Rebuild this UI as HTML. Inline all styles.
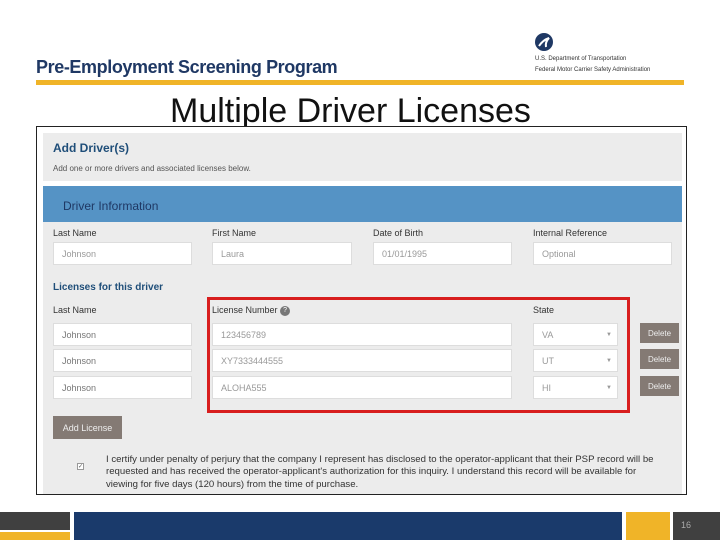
<!DOCTYPE html>
<html><head><style>
*{margin:0;padding:0;box-sizing:border-box}
body{width:720px;height:540px;background:#fff;position:relative;overflow:hidden;font-family:"Liberation Sans",sans-serif}
.a{position:absolute}
.lbl{position:absolute;font-size:9px;color:#333}
.in{position:absolute;background:#fff;border:1px solid #ddd;font-size:9px;color:#999;padding:0 0 0 8px;display:flex;align-items:center}
.del{position:absolute;background:#847a74;color:#eee;font-size:8px;display:flex;align-items:center;justify-content:center;width:39px;height:20px;left:640px}
</style></head><body>
<div class="a" style="left:36px;top:57px;font-size:18px;font-weight:bold;color:#1f3864;letter-spacing:-0.4px">Pre-Employment Screening Program</div>
<svg class="a" style="left:534px;top:32px" width="20" height="20" viewBox="0 0 20 20"><circle cx="10" cy="10" r="9" fill="#1f3864"/><path d="M5 14 Q9 8 15 6 Q11 10 12 15" fill="none" stroke="#fff" stroke-width="2"/></svg>
<div class="a" style="left:535px;top:56px;font-size:6px;color:#333">U.S. Department of Transportation</div>
<div class="a" style="left:535px;top:67px;font-size:6px;color:#333">Federal Motor Carrier Safety Administration</div>
<div class="a" style="left:36px;top:80px;width:648px;height:5px;background:#f0b428"></div>
<div class="a" style="left:170px;top:92px;font-size:34px;color:#111">Multiple Driver Licenses</div>
<div class="a" style="left:36px;top:126px;width:651px;height:369px;border:1px solid #222;background:#fff"></div>
<div class="a" style="left:43px;top:133px;width:639px;height:48px;background:#ececec"></div>
<div class="a" style="left:53px;top:141px;font-size:12px;font-weight:bold;color:#1f4e79">Add Driver(s)</div>
<div class="a" style="left:53px;top:164px;font-size:8px;color:#555">Add one or more drivers and associated licenses below.</div>
<div class="a" style="left:43px;top:186px;width:639px;height:36px;background:#5593c5"></div>
<div class="a" style="left:63px;top:199px;font-size:12px;color:#1f3864">Driver Information</div>
<div class="a" style="left:43px;top:222px;width:639px;height:272px;background:#ececec"></div>
<div class="lbl" style="left:53px;top:228px">Last Name</div>
<div class="lbl" style="left:212px;top:228px">First Name</div>
<div class="lbl" style="left:373px;top:228px">Date of Birth</div>
<div class="lbl" style="left:533px;top:228px">Internal Reference</div>
<div class="in" style="left:53px;top:242px;width:139px;height:23px">Johnson</div>
<div class="in" style="left:212px;top:242px;width:140px;height:23px">Laura</div>
<div class="in" style="left:373px;top:242px;width:139px;height:23px">01/01/1995</div>
<div class="in" style="left:533px;top:242px;width:139px;height:23px">Optional</div>
<div class="a" style="left:53px;top:282px;font-size:10px;font-weight:bold;color:#1f4e79">Licenses for this driver</div>
<div class="lbl" style="left:53px;top:305px">Last Name</div>
<div class="lbl" style="left:212px;top:305px">License Number <span style="display:inline-block;width:10px;height:10px;border-radius:50%;background:#777;color:#fff;font-size:7px;text-align:center;line-height:10px;vertical-align:middle">?</span></div>
<div class="lbl" style="left:533px;top:305px">State</div>
<div class="in" style="left:53px;top:323px;width:139px;height:23px;color:#777">Johnson</div>
<div class="in" style="left:53px;top:349px;width:139px;height:23px;color:#777">Johnson</div>
<div class="in" style="left:53px;top:376px;width:139px;height:23px;color:#777">Johnson</div>
<div class="in" style="left:212px;top:323px;width:300px;height:23px">123456789</div>
<div class="in" style="left:212px;top:349px;width:300px;height:23px">XY7333444555</div>
<div class="in" style="left:212px;top:376px;width:300px;height:23px">ALOHA555</div>
<div class="in" style="left:533px;top:323px;width:85px;height:23px">VA<span style="position:absolute;right:5px;font-size:6px">▼</span></div>
<div class="in" style="left:533px;top:349px;width:85px;height:23px">UT<span style="position:absolute;right:5px;font-size:6px">▼</span></div>
<div class="in" style="left:533px;top:376px;width:85px;height:23px">HI<span style="position:absolute;right:5px;font-size:6px">▼</span></div>
<div class="del" style="top:323px">Delete</div>
<div class="del" style="top:349px">Delete</div>
<div class="del" style="top:376px">Delete</div>
<div class="a" style="left:207px;top:297px;width:423px;height:116px;border:3px solid #d81e1e"></div>
<div class="a" style="left:53px;top:416px;width:69px;height:23px;background:#847a74;color:#eee;font-size:9px;display:flex;align-items:center;justify-content:center">Add License</div>
<div class="a" style="left:77px;top:463px;width:7px;height:7px;border:1px solid #999;background:#fff;font-size:6px;line-height:6px;color:#555">✓</div>
<div class="a" style="left:106px;top:454px;font-size:9.6px;line-height:12.3px;color:#333;white-space:nowrap">I certify under penalty of perjury that the company I represent has disclosed to the operator-applicant that their PSP record will be<br>requested and has received the operator-applicant's authorization for this inquiry. I understand this record will be available for<br>viewing for five days (120 hours) from the time of purchase.</div>
<div class="a" style="left:0;top:512px;width:70px;height:18px;background:#404040"></div>
<div class="a" style="left:0;top:532px;width:70px;height:8px;background:#f0b428"></div>
<div class="a" style="left:74px;top:512px;width:548px;height:28px;background:#1a3a6b"></div>
<div class="a" style="left:626px;top:512px;width:44px;height:28px;background:#f0b428"></div>
<div class="a" style="left:673px;top:512px;width:47px;height:28px;background:#404040;color:#aaa;font-size:9px;padding:8px 0 0 8px">16</div>
</body></html>
